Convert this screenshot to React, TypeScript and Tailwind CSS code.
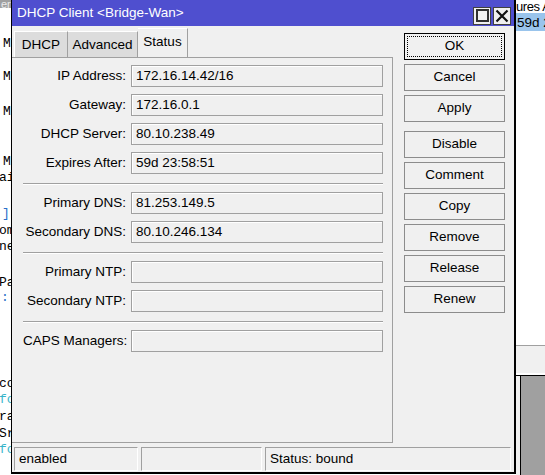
import React from "react";

const mono = "font-['Liberation_Mono',monospace]";

// text fragments of the terminal window sitting behind the dialog
const termLines = [
  { top: 36, left: 3, text: "M", color: "text-black" },
  { top: 69, left: 3, text: "M", color: "text-black" },
  { top: 104, left: 3, text: "M", color: "text-black" },
  { top: 154, left: 3, text: "M", color: "text-black" },
  { top: 170, left: -1, text: "ai", color: "text-black" },
  { top: 206, left: 2, text: "]", color: "text-[#2a6fc9]" },
  { top: 223, left: -1, text: "om", color: "text-black" },
  { top: 239, left: -1, text: "ne", color: "text-black" },
  { top: 275, left: -1, text: "Pa", color: "text-black" },
  { top: 290, left: 1, text: ":", color: "text-[#2a6fc9]" },
  { top: 376, left: -1, text: "co", color: "text-black" },
  { top: 392, left: -1, text: "fo", color: "text-[#39b5c9]" },
  { top: 409, left: -1, text: "ra", color: "text-black" },
  { top: 426, left: -1, text: "Sr", color: "text-black" },
  { top: 442, left: -1, text: "fo", color: "text-[#39b5c9]" },
];

const groups = [
  [
    { label: "IP Address:", value: "172.16.14.42/16" },
    { label: "Gateway:", value: "172.16.0.1" },
    { label: "DHCP Server:", value: "80.10.238.49" },
    { label: "Expires After:", value: "59d 23:58:51" },
  ],
  [
    { label: "Primary DNS:", value: "81.253.149.5" },
    { label: "Secondary DNS:", value: "80.10.246.134" },
  ],
  [
    { label: "Primary NTP:", value: "" },
    { label: "Secondary NTP:", value: "" },
  ],
  [{ label: "CAPS Managers:", value: "" }],
];

const buttons = [
  ["OK", "Cancel", "Apply"],
  ["Disable", "Comment", "Copy", "Remove", "Release", "Renew"],
];

function Field({ label, value }: { label: string; value: string }) {
  return (
    <div className="flex h-[22px] items-center">
      <span className="w-[108px] shrink-0 whitespace-nowrap pr-[5px] text-right">{label}</span>
      <div className="flex h-[22px] w-[252px] items-center border border-[#a0a0a0] bg-[#f0f0f0] pl-[4px] shadow-[inset_1px_1px_0_#ffffff]">
        {value}
      </div>
    </div>
  );
}

function Button({ text, focused }: { text: string; focused?: boolean }) {
  return (
    <button
      type="button"
      className={`flex h-[27px] w-[101px] items-center justify-center border bg-[#f0f0f0] text-black ${
        focused ? "border-black p-[2px]" : "border-[#8c8c8c]"
      }`}
    >
      <span
        className={`flex h-full w-full items-center justify-center ${
          focused ? "border border-dotted border-black" : ""
        }`}
      >
        {text}
      </span>
    </button>
  );
}

function StatusCell({ text, width }: { text: string; width: string }) {
  return (
    <div
      className={`flex h-[24px] items-center border-t border-l border-[#a0a0a0] border-r-white border-b-white border-r border-b px-[4px] ${width}`}
    >
      {text}
    </div>
  );
}

export default function App() {
  return (
    <div className="relative h-[475px] w-[545px] overflow-hidden bg-white font-['Liberation_Sans',Arial,sans-serif] text-[13.5px] text-black">
      {/* terminal behind, left side */}
      <div className="absolute left-0 top-0 h-full w-[11px] overflow-hidden">
        <div className="h-[8px] bg-[#a0a0a0] pl-[1px] text-[11px] leading-[8px] text-white/80">erl</div>
        {termLines.map((l, i) => (
          <span
            key={i}
            className={`absolute ${mono} text-[13px] leading-[16px] ${l.color}`}
            style={{ top: l.top, left: l.left }}
          >
            {l.text}
          </span>
        ))}
      </div>

      {/* list window behind, right side */}
      <div className="absolute left-[516px] top-0 flex h-full w-[29px] flex-col overflow-hidden">
        <div className="h-[13px] whitespace-nowrap text-[13px] leading-[14px] tracking-[-0.4px]">ures A</div>
        <div className="flex h-[18px] items-center whitespace-nowrap bg-[#99c4ec] pl-[1px] pt-[2px]">59d 23</div>
        <div className="flex-1" />
        <div className="h-[30px] border-t border-[#a0a0a0] bg-[#f0f0f0] shadow-[inset_0_-2px_0_#ffffff]" />
        <div className="flex h-[100px] border-t border-black">
          <div className="w-[5px] border-r border-black bg-[#f0f0f0]" />
          <div className="flex-1 bg-[#a0a0a0]" />
        </div>
      </div>

      {/* dialog */}
      <div className="absolute left-[11px] top-0 flex h-[474px] w-[505px] flex-col border-l border-r-2 border-b-2 border-black bg-[#f0f0f0]">
        <div className="flex h-[26px] shrink-0 items-center justify-between bg-[#4f4fcf] pl-[5px] pr-[3px] text-white">
          <span>DHCP Client &lt;Bridge-Wan&gt;</span>
          <div className="flex gap-[2px] pt-[5px]">
            <div className="flex h-[18px] w-[18px] items-center justify-center border border-[#404040] bg-[#f0f0f0]">
              <div className="h-[13px] w-[13px] border-2 border-[#303030]" />
            </div>
            <div className="flex h-[18px] w-[18px] items-center justify-center border border-[#404040] bg-[#f0f0f0]">
              <svg width="14" height="14" viewBox="0 0 14 14">
                <path d="M1.5 1.5L12.5 12.5M12.5 1.5L1.5 12.5" stroke="#111" strokeWidth="2.2" />
              </svg>
            </div>
          </div>
        </div>

        <div className="flex flex-1">
          {/* tabs + panel */}
          <div className="flex w-[381px] flex-col">
            <div className="flex h-[31px] items-end pl-[2px]">
              <div className="flex h-[26px] w-[54px] items-center justify-center border-t border-l border-white border-r border-r-[#a0a0a0] bg-[#dcdcdc] pt-[1px]">
                DHCP
              </div>
              <div className="flex h-[26px] w-[70px] items-center justify-center border-t border-white border-r border-r-[#a0a0a0] bg-[#dcdcdc] pt-[1px]">
                Advanced
              </div>
              <div className="flex h-[29px] w-[50px] items-center justify-center border-t border-white border-r border-r-[#a0a0a0] bg-[#f0f0f0] pb-[2px]">
                Status
              </div>
            </div>
            <div className="flex h-[386px] flex-col border-t border-r border-b border-[#a0a0a0] pl-[11px] pt-[7px]">
              {groups.map((g, gi) => (
                <React.Fragment key={gi}>
                  {gi > 0 && <div className="mb-[7px] mt-[9px] h-[2px] w-[360px] border-t border-[#a0a0a0] border-b border-b-white" />}
                  <div className="flex flex-col gap-[7px]">
                    {g.map((f) => (
                      <Field key={f.label} label={f.label} value={f.value} />
                    ))}
                  </div>
                </React.Fragment>
              ))}
            </div>
          </div>

          {/* action buttons */}
          <div className="flex flex-col gap-[9px] pl-[11px] pt-[7px]">
            {buttons.map((col, ci) => (
              <div key={ci} className="flex flex-col gap-[4px]">
                {col.map((b) => (
                  <Button key={b} text={b} focused={b === "OK"} />
                ))}
              </div>
            ))}
          </div>
        </div>

        {/* status bar */}
        <div className="flex h-[27px] shrink-0 gap-[3px] pl-[2px] pt-[2px]">
          <StatusCell text="enabled" width="w-[124px]" />
          <StatusCell text="" width="w-[121px]" />
          <StatusCell text="Status: bound" width="w-[246px]" />
        </div>
      </div>
    </div>
  );
}
